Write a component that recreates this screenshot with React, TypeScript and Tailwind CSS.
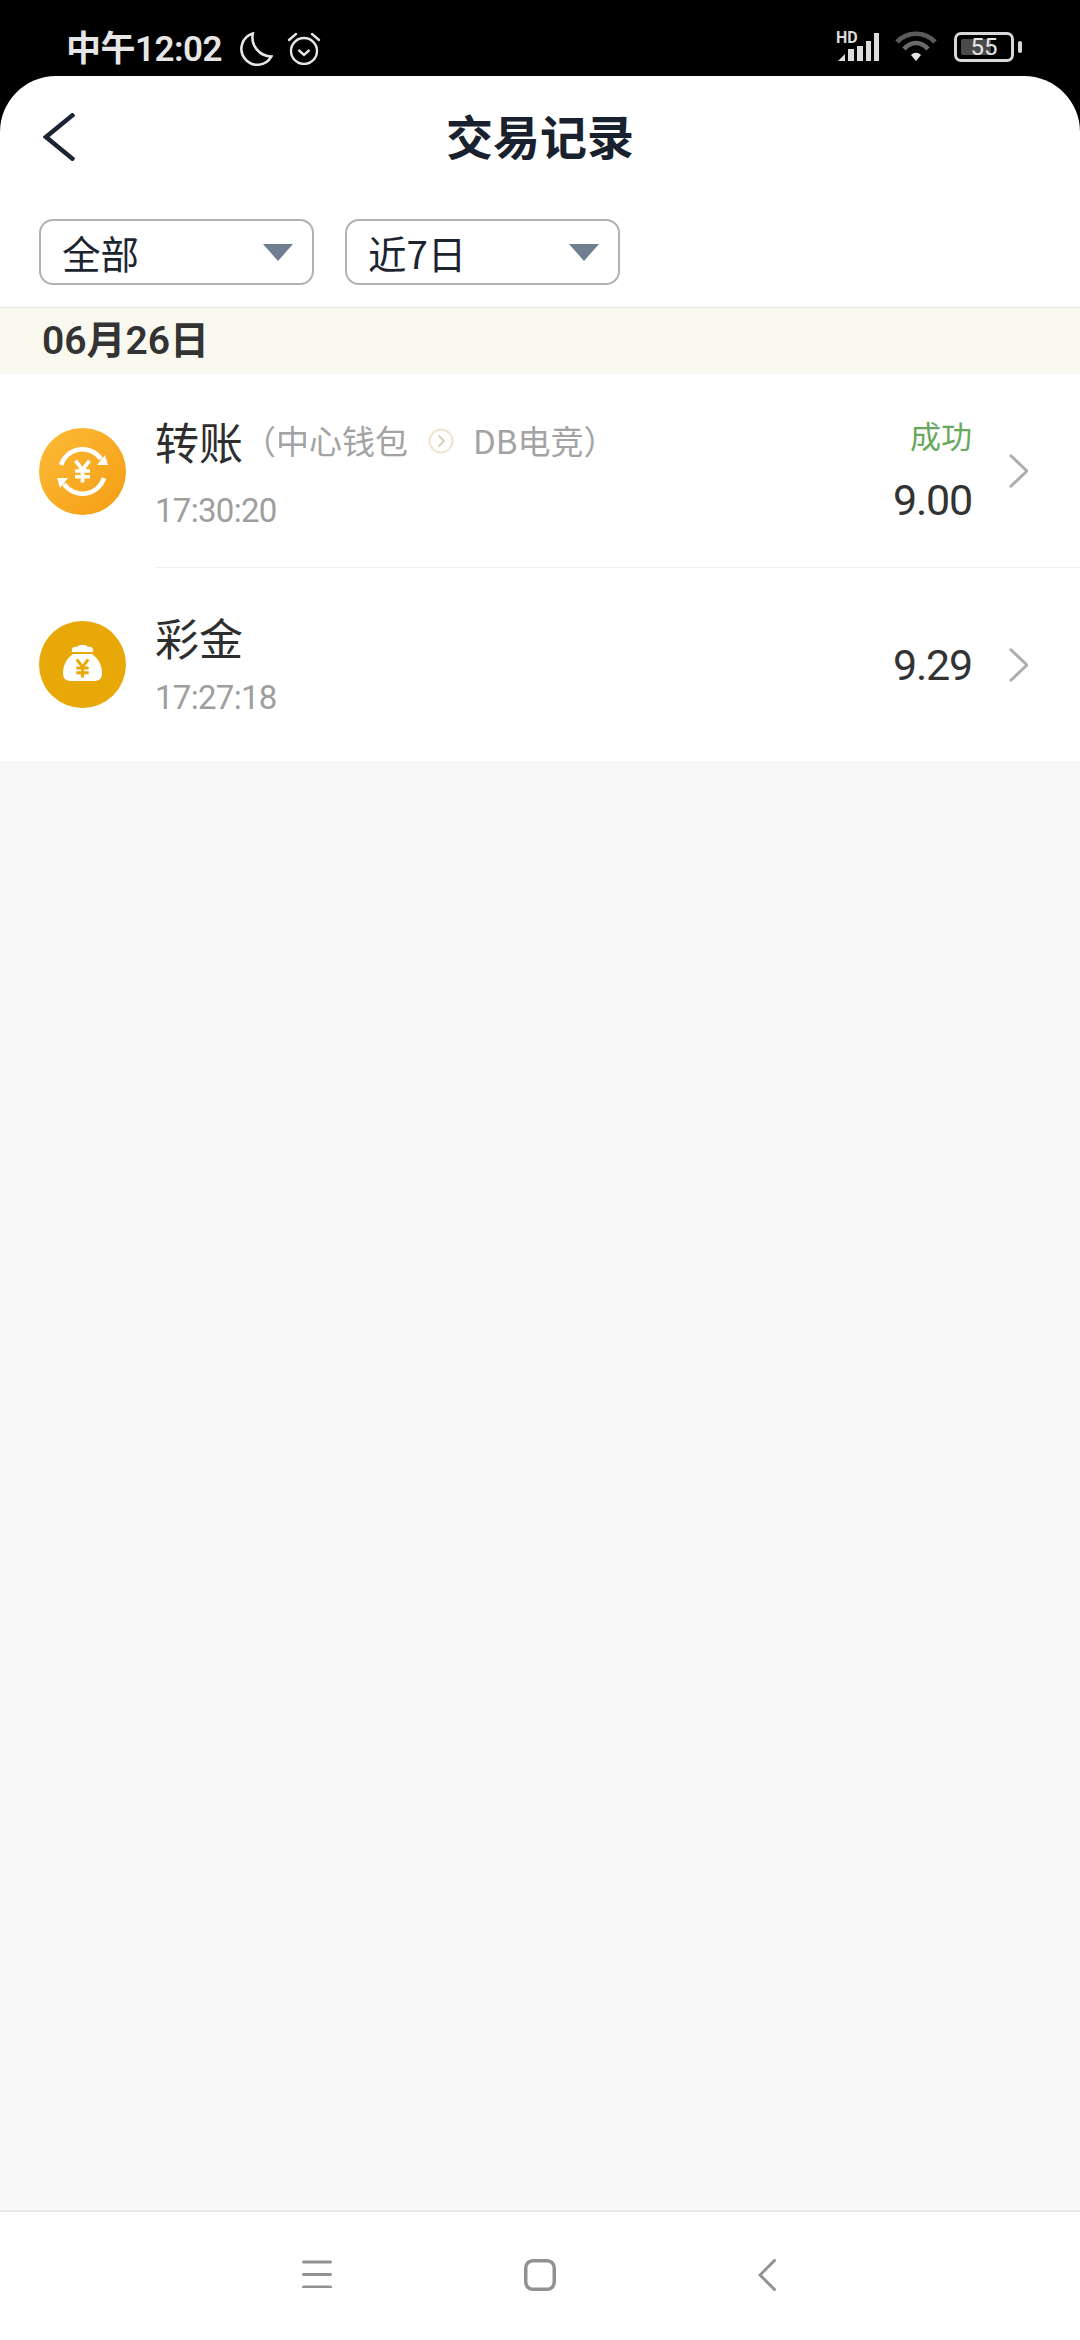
import { ReactNode } from "react";

const cjk = "font-['Noto_Sans_CJK_SC','Noto_Sans',sans-serif]";
const num = "font-['Roboto','Noto_Sans_CJK_SC',sans-serif]";

function YenMark({ color, x, y, s }: { color: string; x: number; y: number; s: number }) {
  return (
    <g transform={`translate(${x} ${y}) scale(${s})`} stroke={color} strokeWidth="3.2" fill="none">
      <path d="M-6 -9 L0 -1 L6 -9" />
      <path d="M-6.500 0 H6.500 M-6.500 5 H6.500 M0 -1 V10" />
    </g>
  );
}

function TransferIcon() {
  return (
    <svg viewBox="0 0 87 87" className="w-[87px] h-[87px] shrink-0">
      <defs>
        <linearGradient id="coin" x1="0" y1="0" x2="1" y2="1">
          <stop offset="0" stopColor="#fdbb38" />
          <stop offset="1" stopColor="#f49d12" />
        </linearGradient>
      </defs>
      <circle cx="43.5" cy="43.5" r="43.5" fill="url(#coin)" />
      <path d="M22 37 A22.5 22.5 0 0 1 62 31" stroke="#fff" strokeWidth="4.5" fill="none" />
      <path d="M65 50 A22.5 22.5 0 0 1 25 56" stroke="#fff" strokeWidth="4.5" fill="none" />
      <path d="M58 37 L69 37 L66 27 Z M29 50 L18 50 L21 60 Z" fill="#fff" />
      <YenMark color="#fff" x={43.5} y={43} s={1.15} />
    </svg>
  );
}

function BonusIcon() {
  return (
    <svg viewBox="0 0 87 87" className="w-[87px] h-[87px] shrink-0">
      <circle cx="43.5" cy="43.5" r="43.5" fill="#e8a808" />
      <path d="M33 31 C32 26 36 25 38 26 C40 23 47 23 49 26 C52 25 55 27 54 31 Z" fill="#fff" />
      <path d="M34 33 H53 C60 38 63 45 63 52 C63 58 60 60 55 60 H32 C27 60 24 58 24 52 C24 45 27 38 34 33 Z" fill="#fff" />
      <YenMark color="#e8a808" x={43.5} y={47} s={0.95} />
    </svg>
  );
}

function RowChevron() {
  return (
    <svg viewBox="0 0 19 34" className="w-[19px] h-[34px] shrink-0">
      <path d="M1 1 L18 17 L1 33" fill="none" stroke="#adadad" strokeWidth="3" />
    </svg>
  );
}

function Dropdown({ label }: { label: string }) {
  return (
    <div className="w-[275px] h-[66px] border-[2.5px] border-[#b2b2b2] rounded-[14px] flex items-center justify-between pl-[21px] pr-[19px]">
      <span className={`${cjk} text-[38.5px] leading-none text-[#1c2430]`}>{label}</span>
      <svg viewBox="0 0 30 17" className="w-[30px] h-[17px]">
        <path d="M0 0 H30 L15 17 Z" fill="#6f7e91" />
      </svg>
    </div>
  );
}

function Row({ icon, body, right, divider }: { icon: ReactNode; body: ReactNode; right: ReactNode; divider?: boolean }) {
  return (
    <div className={`flex items-center bg-white pl-[39px] ${divider ? "h-[194px]" : "h-[193px]"}`}>
      {icon}
      <div className={`ml-[29px] flex-1 h-full flex items-center pr-[52px] ${divider ? "border-b border-[#efefef]" : ""}`}>
        <div className="flex-1">{body}</div>
        <div className="flex flex-col items-end mr-[37px]">{right}</div>
        <RowChevron />
      </div>
    </div>
  );
}

export default function App() {
  return (
    <div className="w-[1080px] h-[2340px] bg-black flex flex-col overflow-hidden">
      {/* status bar */}
      <div className="h-[76px] shrink-0 flex items-start justify-between pt-[31px] pl-[66px] pr-[66px] text-[#e6e6e6]">
        <div className="flex items-center">
          <span className={`${num} mt-[2px] text-[35px] leading-[33px] font-semibold tracking-[-0.5px]`}>中午12:02</span>
          <svg viewBox="0 0 32 32" className="w-[34px] h-[34px] ml-[17px]" fill="none" stroke="#e6e6e6" strokeWidth="2.4">
            <path d="M13 1.500 A15 15 0 1 0 30.500 23 A18 18 0 0 1 13 1.500 Z" />
          </svg>
          <svg viewBox="0 0 34 33" className="w-[34px] h-[33px] ml-[14px]" fill="none" stroke="#e6e6e6" strokeWidth="2.4">
            <circle cx="17" cy="19" r="13" />
            <path d="M11.500 18 L17 23 L22.500 18" />
            <path d="M2 8 L9 2 M32 8 L25 2" strokeLinecap="round" />
          </svg>
        </div>
        <div className="flex items-center">
          <div className="relative w-[43px] h-[30px]">
            <span className="absolute left-0 top-0 font-['Roboto',sans-serif] text-[16px] leading-[12px] font-bold text-[#dcdcdc]">HD</span>
            <svg viewBox="0 0 43 30" className="w-[43px] h-[30px]" fill="#dcdcdc">
              <path d="M2 29 L9 22 V29 Z" />
              <rect x="12" y="17" width="6" height="12" />
              <rect x="21" y="14" width="6" height="15" />
              <rect x="30" y="9" width="5" height="20" />
              <rect x="38" y="1" width="5" height="28" />
            </svg>
          </div>
          <svg viewBox="0 0 42 32" className="w-[42px] h-[32px] ml-[16px]" fill="none">
            <path d="M2 11 C12 0 30 0 40 11" stroke="#5a5a5a" strokeWidth="4.500" />
            <path d="M9 18 C16 10 26 10 33 18" stroke="#6a6a6a" strokeWidth="4.500" />
            <path d="M16 24 C19 21 23 21 26 24 L21 30 Z" fill="#e6e6e6" />
          </svg>
          <div className="relative ml-[17px] w-[60px] h-[30px] border-[3px] border-[#d8d8d8] rounded-[7px] flex items-center justify-center">
            <div className="absolute left-[4px] top-[4px] bottom-[4px] w-[30px] bg-[#4a4a4a] rounded-[2px]" />
            <span className={`${num} relative text-[24px] leading-none text-[#e6e6e6]`}>55</span>
            <div className="absolute right-[-11px] top-[6px] w-[4px] h-[12px] bg-[#d8d8d8] rounded-[2px]" />
          </div>
        </div>
      </div>

      <div className="flex-1 bg-white rounded-t-[56px] flex flex-col overflow-hidden">
        {/* title bar */}
        <div className="relative h-[122px] shrink-0 flex items-center justify-center">
          <svg viewBox="0 0 32 48" className="absolute left-[43px] top-[37px] w-[32px] h-[48px]">
            <path d="M31 1 L3 24 L31 47" fill="none" stroke="#1a2433" strokeWidth="4.500" />
          </svg>
          <h1 className={`${cjk} mb-[5px] text-[47px] leading-none font-bold text-[#18212d]`}>交易记录</h1>
        </div>

        {/* filters */}
        <div className="flex gap-[31px] pl-[39px] pt-[21px] pb-[22px]">
          <Dropdown label="全部" />
          <Dropdown label="近7日" />
        </div>

        {/* day header */}
        <div className="h-[67px] shrink-0 border-t border-[#e9e9e6] bg-[#faf9f0] flex items-center pl-[42px]">
          <span className={`${num} text-[39px] leading-none font-semibold text-[#333333]`}>06月26日</span>
        </div>

        <Row
          divider
          icon={<TransferIcon />}
          body={
            <div className="flex flex-col pt-[5px]">
              <div className="flex items-center h-[44px]">
                <span className={`${cjk} text-[44px] leading-none text-[#2e2e2e]`}>转账</span>
                <span className={`${cjk} text-[33px] leading-none text-[#a3a3a3]`}>（中心钱包</span>
                <svg viewBox="0 0 26 26" className="w-[26px] h-[26px] ml-[20px]" fill="none">
                  <circle cx="13" cy="13" r="11.500" stroke="#eee3cf" strokeWidth="2" />
                  <path d="M10.500 7.500 L16 13 L10.500 18.500" stroke="#d9cdb4" strokeWidth="1.800" />
                </svg>
                <span className={`${cjk} ml-[19px] text-[33px] leading-none text-[#a3a3a3]`}>DB电竞）</span>
              </div>
              <span className={`${num} mt-[31px] text-[33px] leading-[34px] tracking-[-0.7px] text-[#9e9e9e]`}>17:30:20</span>
            </div>
          }
          right={
            <>
              <span className={`${cjk} text-[31px] leading-none text-[#68a95e]`}>成功</span>
              <span className={`${num} mt-[29px] text-[43px] leading-none tracking-[-1.2px] text-[#333333]`}>9.00</span>
            </>
          }
        />
        <Row
          icon={<BonusIcon />}
          body={
            <div className="flex flex-col pt-[2px]">
              <span className={`${cjk} -mt-[2px] text-[44px] leading-[44px] text-[#2e2e2e]`}>彩金</span>
              <span className={`${num} mt-[22px] text-[33px] leading-[34px] tracking-[-0.7px] text-[#9e9e9e]`}>17:27:18</span>
            </div>
          }
          right={<span className={`${num} mt-[2px] text-[43px] leading-none tracking-[-1.2px] text-[#333333]`}>9.29</span>}
        />

        <div className="flex-1 bg-[#f8f8f8]" />

        {/* navigation bar */}
        <div className="h-[130px] shrink-0 border-t-2 border-[#e8e8e8] bg-white relative flex items-start pt-[47px] pl-[302px]">
          <svg viewBox="0 0 30 28" className="w-[30px] h-[28px] mt-[1px]" fill="none" stroke="#919191" strokeWidth="3" strokeLinecap="round">
            <path d="M1.500 2 H28.500 M1.500 14.500 H28.500 M1.500 27 H28.500" />
          </svg>
          <svg viewBox="0 0 32 32" className="w-[32px] h-[32px] ml-[192px]" fill="none" stroke="#919191" strokeWidth="3.500">
            <rect x="1.750" y="1.750" width="28.500" height="28.500" rx="7" />
          </svg>
          <svg viewBox="0 0 18 32" className="w-[18px] h-[32px] ml-[202px]" fill="none" stroke="#919191" strokeWidth="3" strokeLinecap="round">
            <path d="M16.500 1.500 L2 16 L16.500 30.500" />
          </svg>
        </div>
      </div>
    </div>
  );
}
